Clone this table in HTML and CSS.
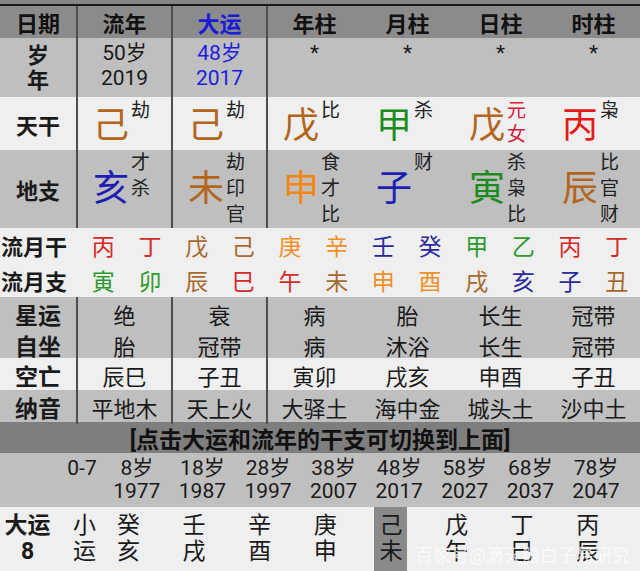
FILE: index.html
```html
<!DOCTYPE html>
<html lang="zh">
<head>
<meta charset="utf-8">
<link rel="stylesheet" href="styles.css">
</head>
<body>
<div class="page">
  <div class="strip"></div>

  <div class="prow hdr">
    <div class="cell sep lbl">日期</div>
    <div class="cell sep">流年</div>
    <div class="cell sep blue">大运</div>
    <div class="cell">年柱</div>
    <div class="cell">月柱</div>
    <div class="cell">日柱</div>
    <div class="cell">时柱</div>
  </div>

  <div class="prow agerow">
    <div class="cell sep lbl">岁<br>年</div>
    <div class="cell sep">50岁<br>2019</div>
    <div class="cell sep blue">48岁<br>2017</div>
    <div class="cell">*</div>
    <div class="cell">*</div>
    <div class="cell">*</div>
    <div class="cell">*</div>
  </div>

  <div class="prow stemrow">
    <div class="cell sep lbl">天干</div>
    <div class="cell sep pair"><span class="big brown">己</span><span class="ann">劫</span></div>
    <div class="cell sep pair"><span class="big brown">己</span><span class="ann">劫</span></div>
    <div class="cell pair"><span class="big brown">戊</span><span class="ann">比</span></div>
    <div class="cell pair"><span class="big green">甲</span><span class="ann">杀</span></div>
    <div class="cell pair"><span class="big brown">戊</span><span class="ann red2">元<br>女</span></div>
    <div class="cell pair"><span class="big red">丙</span><span class="ann">枭</span></div>
  </div>

  <div class="prow branchrow">
    <div class="cell sep lbl">地支</div>
    <div class="cell sep pair"><span class="big blue2">亥</span><span class="ann">才<br>杀</span></div>
    <div class="cell sep pair"><span class="big brown">未</span><span class="ann">劫<br>印<br>官</span></div>
    <div class="cell pair"><span class="big orange">申</span><span class="ann">食<br>才<br>比</span></div>
    <div class="cell pair"><span class="big blue2">子</span><span class="ann">财</span></div>
    <div class="cell pair"><span class="big green">寅</span><span class="ann">杀<br>枭<br>比</span></div>
    <div class="cell pair"><span class="big brown">辰</span><span class="ann">比<br>官<br>财</span></div>
  </div>

  <div class="liuyue">
    <div class="lyrow">
      <div class="lylbl">流月干</div>
      <div class="ly c-red">丙</div><div class="ly c-red">丁</div>
      <div class="ly c-brown">戊</div><div class="ly c-brown">己</div>
      <div class="ly c-orange">庚</div><div class="ly c-orange">辛</div>
      <div class="ly c-navy">壬</div><div class="ly c-navy">癸</div>
      <div class="ly c-green">甲</div><div class="ly c-green">乙</div>
      <div class="ly c-red">丙</div><div class="ly c-red">丁</div>
    </div>
    <div class="lyrow">
      <div class="lylbl">流月支</div>
      <div class="ly c-green">寅</div><div class="ly c-green">卯</div>
      <div class="ly c-brown">辰</div><div class="ly c-red">巳</div>
      <div class="ly c-red">午</div><div class="ly c-brown">未</div>
      <div class="ly c-orange">申</div><div class="ly c-orange">酉</div>
      <div class="ly c-brown">戌</div><div class="ly c-navy">亥</div>
      <div class="ly c-navy">子</div><div class="ly c-brown">丑</div>
    </div>
  </div>

  <div class="prow srow gray h31">
    <div class="cell sep lbl">星运</div>
    <div class="cell sep">绝</div>
    <div class="cell sep">衰</div>
    <div class="cell">病</div>
    <div class="cell">胎</div>
    <div class="cell">长生</div>
    <div class="cell">冠带</div>
  </div>
  <div class="prow srow gray h30">
    <div class="cell sep lbl">自坐</div>
    <div class="cell sep">胎</div>
    <div class="cell sep">冠带</div>
    <div class="cell">病</div>
    <div class="cell">沐浴</div>
    <div class="cell">长生</div>
    <div class="cell">冠带</div>
  </div>
  <div class="prow srow light h32">
    <div class="cell sep lbl">空亡</div>
    <div class="cell sep">辰巳</div>
    <div class="cell sep">子丑</div>
    <div class="cell">寅卯</div>
    <div class="cell">戌亥</div>
    <div class="cell">申酉</div>
    <div class="cell">子丑</div>
  </div>
  <div class="prow srow gray h32">
    <div class="cell sep lbl">纳音</div>
    <div class="cell sep">平地木</div>
    <div class="cell sep">天上火</div>
    <div class="cell">大驿土</div>
    <div class="cell">海中金</div>
    <div class="cell">城头土</div>
    <div class="cell">沙中土</div>
  </div>

  <div class="banner">[点击大运和流年的干支可切换到上面]</div>

  <div class="drow ages">
    <div class="dc"></div>
    <div class="dc">0-7</div>
    <div class="dc">8岁<br>1977</div>
    <div class="dc">18岁<br>1987</div>
    <div class="dc">28岁<br>1997</div>
    <div class="dc">38岁<br>2007</div>
    <div class="dc">48岁<br>2017</div>
    <div class="dc">58岁<br>2027</div>
    <div class="dc">68岁<br>2037</div>
    <div class="dc">78岁<br>2047</div>
    <div class="dc"></div>
  </div>

  <div class="drow luck">
    <div class="dlbl">大运<br>8</div>
    <div class="gz"><span class="gzt">小<br>运</span></div>
    <div class="gz"><span class="gzt">癸<br>亥</span></div>
    <div class="gz"><span class="gzt">壬<br>戌</span></div>
    <div class="gz"><span class="gzt">辛<br>酉</span></div>
    <div class="gz"><span class="gzt">庚<br>申</span></div>
    <div class="gz"><span class="gzt sel">己<br>未</span></div>
    <div class="gz"><span class="gzt">戊<br>午</span></div>
    <div class="gz"><span class="gzt">丁<br>巳</span></div>
    <div class="gz"><span class="gzt">丙<br>辰</span></div>
    <div class="gz"></div>
  </div>

  <div class="watermark">百家号@滴天髓白子易研究</div>
</div>
</body>
</html>
```
FILE: styles.css
```css
* { box-sizing: border-box; }
html, body { margin: 0; padding: 0; }
body {
  width: 640px;
  height: 571px;
  overflow: hidden;
  background: #efefef;
  font-family: "Roboto", "Noto Sans CJK SC", sans-serif;
  color: #1a1a1a;
}
.page { position: relative; width: 640px; height: 571px; overflow: hidden; }

.strip {
  height: 6px;
  background: #868686;
  border-bottom: 2px solid #1c1c1c;
}

.prow {
  display: grid;
  grid-template-columns: 78px 95px 95px repeat(4, 1fr);
}
.cell {
  display: flex;
  justify-content: center;
  align-items: center;
  text-align: center;
  font-size: 21px;
}
.sep { border-right: 2px solid #4e4e4e; }
.lbl { font-weight: bold; font-size: 22px; }
.blue { color: #1d1de0; }

.hdr { height: 32px; background: #8b8b8b; }
.hdr .cell { font-weight: bold; font-size: 22px; color: #111; }
.hdr .blue { color: #1a1ad8; }

.agerow { height: 59px; background: #bfbfbf; }
.agerow .cell { align-items: flex-start; padding-top: 3px; line-height: 25px; }
.agerow .lbl { padding-top: 5px; }

.stemrow { height: 53px; background: #efefef; }
.branchrow { height: 78px; background: #bfbfbf; }

.pair { padding-right: 6px; }
.pair .big {
  font-size: 36px;
  line-height: 1;
  align-self: center;
}
.pair .ann {
  align-self: flex-start;
  font-size: 19px;
  text-align: left;
  margin-left: 2px;
  color: #222;
}
.stemrow .ann { line-height: 24px; padding-top: 2px; }
.stemrow .big { margin-top: 4px; }
.branchrow .ann { line-height: 26px; }

.brown { color: #b3661b; }
.green { color: #1c8c1c; }
.red { color: #e61818; }
.red2 { color: #d4203a !important; }
.blue2 { color: #1e1eb4; }
.orange { color: #f5860f; }

.liuyue { background: #efefef; }
.lyrow {
  display: grid;
  grid-template-columns: 80px repeat(12, 1fr);
  height: 34.5px;
  align-items: center;
}
.lylbl { font-weight: bold; font-size: 22px; padding-left: 1px; }
.ly { text-align: center; font-size: 23px; }
.c-red { color: #d62a2a; }
.c-brown { color: #a66a2e; }
.c-orange { color: #f0902a; }
.c-navy { color: #2a2a9c; }
.c-green { color: #2e9a2e; }

.srow .cell { font-size: 22px; }
.srow .lbl { font-size: 23px; }
.gray { background: #bfbfbf; }
.light { background: #efefef; }
.h31 { height: 31px; }
.h30 { height: 30px; }
.h32 { height: 32px; }

.banner {
  height: 31px;
  background: #7e7e7e;
  display: flex;
  justify-content: center;
  align-items: center;
  font-weight: bold;
  font-size: 23px;
  color: #111;
}

.drow {
  display: grid;
  grid-template-columns: 60px 44px repeat(8, 65.6px) 1fr;
}
.ages { height: 54px; background: #bfbfbf; }
.dc {
  text-align: center;
  font-size: 21px;
  line-height: 23px;
  padding-top: 4px;
}
.luck { height: 64px; background: #efefef; }
.dlbl {
  display: flex;
  align-items: center;
  justify-content: center;
  text-align: center;
  padding-right: 5px;
  font-weight: bold;
  font-size: 23px;
  line-height: 26px;
}
.gz {
  display: flex;
  padding-left: 8px;
}
.gzt {
  display: flex;
  align-items: center;
  padding: 0 5px;
  font-size: 23px;
  line-height: 26px;
  text-align: center;
}
.sel { background: #8a8a8a; }

.watermark {
  position: absolute;
  left: 415px;
  top: 543px;
  font-size: 18px;
  line-height: 22px;
  color: rgba(255, 255, 255, 0.72);
  white-space: nowrap;
  font-family: "Noto Sans CJK SC", sans-serif;
}
```
